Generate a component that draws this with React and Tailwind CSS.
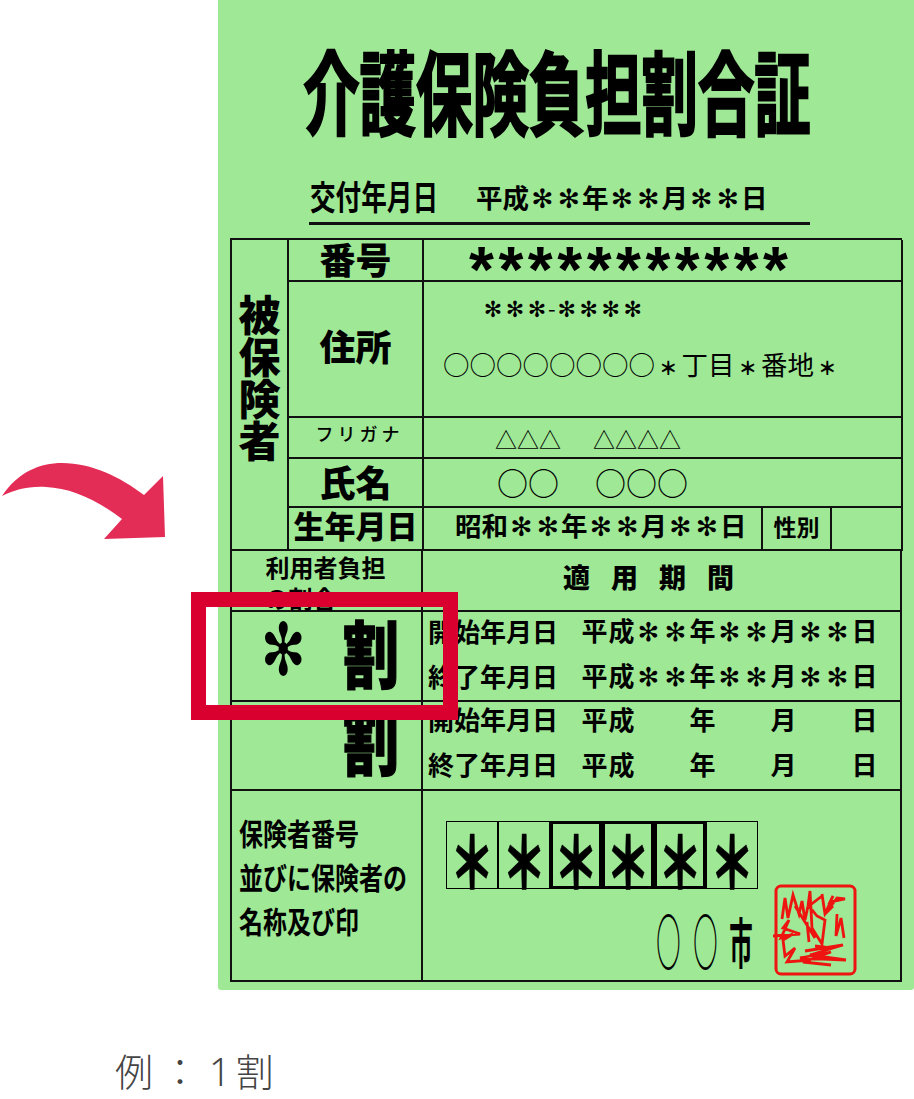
const Cell = ({ className = "", children }) => (
  <div className={"flex items-center border-r-2 border-b-2 border-[#111] min-w-0 " + className}>{children}</div>
);

const S = () => (
  <span className="inline-block w-[1em] text-center font-normal">
    <span className="text-[1em] leading-none font-['DejaVu_Sans',sans-serif]">✻</span>
  </span>
);

const B = () => (
  <span className="inline-block w-[1em] text-center">
    <span className="text-[0.7em] leading-none font-black">＊</span>
  </span>
);

function DateRow({ label, filled, className = "" }) {
  const cells = filled
    ? ["平", "成", "*", "*", "年", "*", "*", "月", "*", "*", "日"]
    : ["平", "成", "", "", "年", "", "", "月", "", "", "日"];
  return (
    <div className={"flex items-center shrink-0 h-[45px] pl-[5px] text-[26px] font-bold leading-none " + className}>
      <span className="w-[153px] shrink-0 whitespace-nowrap">{label}</span>
      <div className="grid grid-cols-[repeat(11,27px)]">
        {cells.map((c, i) => (
          <span key={i} className="text-center">{c === "*" ? <S /> : c}</span>
        ))}
      </div>
    </div>
  );
}

const Box = ({ thick }) => (
  <div className={"w-[52px] h-[68px] flex items-center justify-center " + (thick ? "border-[3px] border-black" : "border border-black")}>
    <span className="text-[62px] font-black leading-none scale-x-[0.72] scale-y-[1.15] translate-y-[3px] [-webkit-text-stroke:0.6px_black]">＊</span>
  </div>
);

const Stamp = () => (
  <svg width="84" height="94" viewBox="8 7 84 94" className="shrink-0 translate-y-[2px]" fill="none" stroke="#ee1410">
    <rect x="11" y="10" width="79" height="88" rx="5" strokeWidth="3" />
    <path strokeWidth="2.8" d="M17 43 L20 22 L23 42 L28 19 L34 38 L37 25 L40 44 L43 30 L45 15 L47 52 L57 68 L60 44 L52 40 L44 30 L57 20 M57 18 L60 38 L72 22 L80 23 L65 26 L68 20 L60 38 L68 30 M72 38 L71 60 L76 42 L79 62 M8 60 L35 58 L18 52 L24 44 L16 62 L28 58 L18 64 L20 80 L30 72 L22 86 L46 84 M30 30 L50 62 M40 75 L78 69 L45 79 L81 84 L35 82 L66 76 L38 86 L66 89 M42 46 L44 66 M50 70 L66 72" />
  </svg>
);

export default function App() {
  return (
    <div className="relative w-[914px] h-[1099px] overflow-hidden bg-white text-black font-['Noto_Sans_CJK_JP',sans-serif]">
      <div className="ml-[218px] w-[696px] h-[990px] bg-[#9fe896] rounded-bl-[3px] rounded-br-[3px] flex flex-col">
        <div className="h-[184px] flex items-center justify-center pb-[6px]">
          <h1 className="ml-[-18px] text-[56.4px] leading-none font-bold whitespace-nowrap scale-y-[1.62] [-webkit-text-stroke:1.5px_black]">介護保険負担割合証</h1>
        </div>
        <div className="ml-[91px] w-[501px] h-[41px] border-b-[3px] border-[#111] flex items-start font-bold leading-none">
          <span className="text-[25.6px] mt-[-6px] w-[166px] ml-[1px] whitespace-nowrap scale-y-[1.32] origin-top">交付年月日</span>
          <span className="text-[26.5px] whitespace-nowrap">平成<S /><S />年<S /><S />月<S /><S />日</span>
        </div>
        <div className="h-[13px]" />

        <div className="ml-[12px] w-[672px] border-l-2 border-t-2 border-[#111]">
          <div className="grid grid-cols-[57px_135px_479px] grid-rows-[42px_136px_41px_49px_43px]">
            <Cell className="row-span-5 flex-col justify-start pt-[52px] text-[42px] font-black leading-[42px]">
              <span>被</span><span>保</span><span>険</span><span>者</span>
            </Cell>
            <Cell className="justify-center pb-[4px] text-[36px] font-black leading-none"><span>番号</span></Cell>
            <Cell className="pl-[45px]">
              <span className="text-[64px] leading-none font-bold tracking-[4.5px] font-['Liberation_Sans',sans-serif] translate-y-[10px] whitespace-nowrap">***********</span>
            </Cell>
            <Cell className="justify-center pb-[8px] text-[36px] font-black leading-none"><span>住所</span></Cell>
            <Cell className="flex-col items-start pl-[19px] leading-none">
              <span className="text-[22px] ml-[39px] mt-[14px] whitespace-nowrap"><S /><S /><S />-<S /><S /><S /><S /></span>
              <span className="text-[26.5px] mt-[30px] whitespace-nowrap">○○○○○○○○<B />丁目<B />番地<B /></span>
            </Cell>
            <Cell className="justify-center pl-[8px] pb-[10px] text-[18px] font-medium tracking-[4px] leading-none"><span>フリガナ</span></Cell>
            <Cell className="pl-[71px] text-[22px] leading-none whitespace-nowrap"><span>△△△<span className="ml-[32px]">△△△△</span></span></Cell>
            <Cell className="justify-center pb-[4px] text-[36px] font-black leading-none"><span>氏名</span></Cell>
            <Cell className="pl-[73px] pb-[2px] text-[31px] leading-none whitespace-nowrap"><span>○○<span className="ml-[36px]">○○○</span></span></Cell>
            <Cell className="justify-center pb-[8px] text-[31px] font-black leading-none whitespace-nowrap"><span>生年月日</span></Cell>
            <div className="grid grid-cols-[339px_69px_71px] min-w-0">
              <Cell className="pl-[31px] pb-[4px] text-[26.5px] font-bold leading-none whitespace-nowrap"><span>昭和<S /><S />年<S /><S />月<S /><S />日</span></Cell>
              <Cell className="justify-center pb-[4px] text-[23px] font-bold leading-none"><span>性別</span></Cell>
              <Cell />
            </div>
          </div>

          <div className="grid grid-cols-[191px_479px] grid-rows-[61px_90px_89px_191px]">
            <Cell className="flex-col justify-start pr-[2px] text-[24px] font-bold leading-[31px] whitespace-nowrap">
              <span>利用者負担</span>
              <span className="mr-[50px]">の割合</span>
            </Cell>
            <Cell className="justify-center pr-[26px] pb-[8px] text-[27px] font-black leading-none gap-[21px]">
              <span>適</span><span>用</span><span>期</span><span>間</span>
            </Cell>
            <Cell className="pl-[26px] pb-[10px] leading-none whitespace-nowrap">
              <span className="text-[54px] w-[50px] text-center font-['DejaVu_Sans',sans-serif] scale-y-[1.35]">✻</span>
              <span className="ml-[35px] text-[56px] font-black scale-y-[1.3] [-webkit-text-stroke:1px_black]">割</span>
            </Cell>
            <Cell className="flex-col items-stretch justify-start">
              <DateRow label="開始年月日" filled className="-mt-[4px]" />
              <DateRow label="終了年月日" filled />
            </Cell>
            <Cell className="pl-[111px] pb-[16px] leading-none whitespace-nowrap">
              <span className="text-[56px] font-black scale-y-[1.3] [-webkit-text-stroke:1px_black]">割</span>
            </Cell>
            <Cell className="flex-col items-stretch justify-start">
              <DateRow label="開始年月日" className="-mt-[6px]" />
              <DateRow label="終了年月日" />
            </Cell>
            <Cell className="flex-col items-start justify-center pb-[20px] pl-[7px] text-[24px] font-bold leading-[44px] whitespace-nowrap">
              <span className="scale-y-[1.25] origin-left">保険者番号</span>
              <span className="scale-y-[1.25] origin-left">並びに保険者の</span>
              <span className="scale-y-[1.25] origin-left">名称及び印</span>
            </Cell>
            <Cell className="flex-col items-start pl-[23px] pt-[30px]">
              <div className="flex">
                <Box /><Box /><Box thick /><Box thick /><Box thick /><Box />
              </div>
              <div className="flex items-end w-full mt-[-8px] pr-[43px] justify-end">
                <div className="flex items-center leading-none text-[54px] mb-[8px] mr-[24px] whitespace-nowrap">
                  <span className="w-[37px] text-center font-bold scale-x-[0.45] scale-y-[1.15]">○</span>
                  <span className="w-[37px] text-center font-bold scale-x-[0.45] scale-y-[1.15]">○</span>
                  <span className="w-[24px] ml-[5px] text-[36px] text-center font-bold scale-x-[0.65] scale-y-[1.5]">市</span>
                </div>
                <Stamp />
              </div>
            </Cell>
          </div>
        </div>
      </div>

      <div className="pl-[115px] pt-[52px] text-[38px] leading-[56px] font-light text-[#444] whitespace-nowrap">
        例<span className="ml-[8px] mr-[10px]">：</span><span className="font-['Noto_Sans',sans-serif]">1</span><span className="ml-[5px]">割</span>
      </div>

      <svg className="absolute left-0 top-[455px]" width="170" height="90" viewBox="0 455 170 90">
        <path fill="#e32d56" d="M2 496 C18 472 40 463 62 463 C92 463 120 477 144 495 L163 476 L165 537 L104 539 L122 519 C96 499 70 488 46 487 C28 486 14 490 2 496 Z" />
      </svg>
      <div className="absolute left-[191px] top-[592px] w-[267px] h-[128px] border-[15px] border-[#d9002f]" />
    </div>
  );
}
